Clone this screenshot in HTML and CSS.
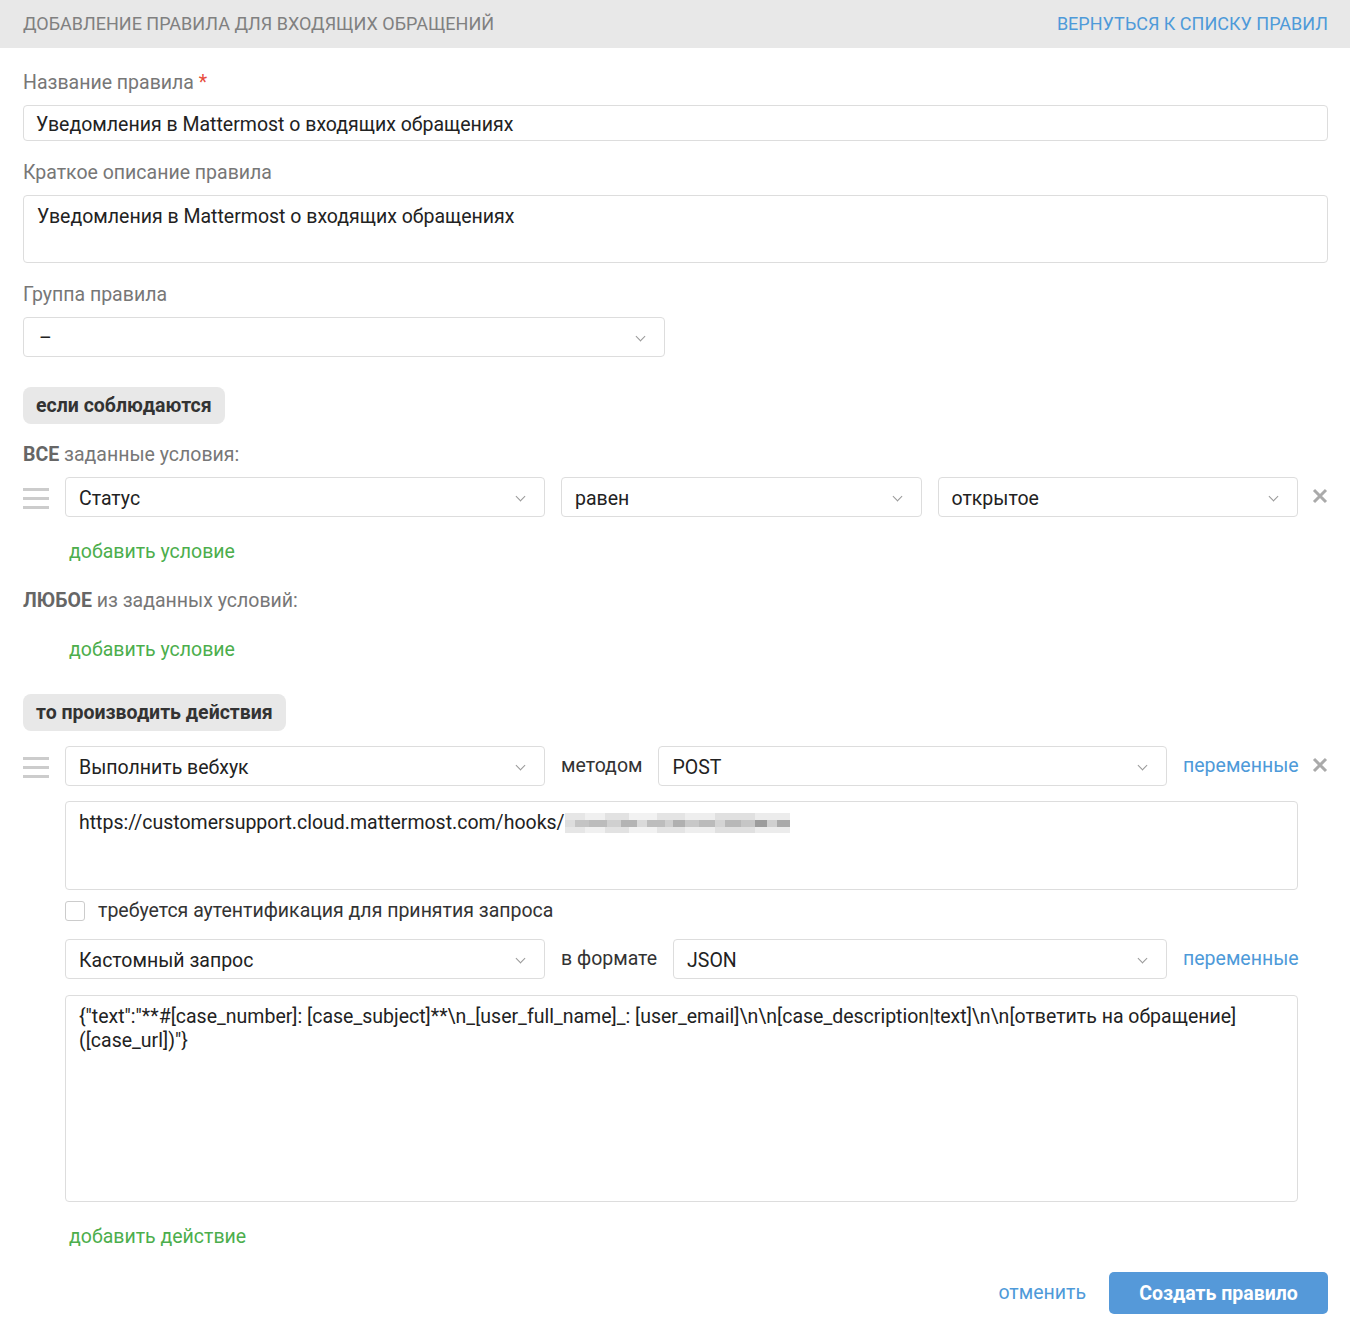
FILE: index.html
```html
<!DOCTYPE html>
<html lang="ru">
<head>
  <meta charset="UTF-8">
  <meta name="viewport" content="width=device-width, initial-scale=1.0">
  <title>Добавление правила</title>
  <link rel="stylesheet" href="styles.css">
</head>
<body>
  <div class="page-head">
    <span class="page-title">Добавление правила для входящих обращений</span>
    <a class="back-link" href="#">Вернуться к списку правил</a>
  </div>

  <form class="rule-form">
    <div class="field">
      <label class="field-label">Название правила <span class="req">*</span></label>
      <div class="input">Уведомления в Mattermost о входящих обращениях</div>
    </div>
    <div class="field">
      <label class="field-label">Краткое описание правила</label>
      <div class="input textarea short">Уведомления в Mattermost о входящих обращениях</div>
    </div>
    <div class="field">
      <label class="field-label">Группа правила</label>
      <div class="select group-select"><span class="dash">–</span><i class="chev"></i></div>
    </div>

    <div class="block-tag">если соблюдаются</div>

    <div class="cond-caption"><b>ВСЕ</b> заданные условия:</div>
    <div class="line">
      <span class="drag"><i></i><i></i><i></i></span>
      <div class="line-body">
        <div class="row">
          <div class="select w-main">Статус<i class="chev"></i></div>
          <div class="select w-op">равен<i class="chev"></i></div>
          <div class="select w-op">открытое<i class="chev"></i></div>
        </div>
      </div>
      <svg class="remove" viewBox="0 0 16 16"><path d="M2 2L14 14M14 2L2 14"/></svg>
    </div>
    <a class="add-link" href="#">добавить условие</a>

    <div class="cond-caption any"><b>ЛЮБОЕ</b> из заданных условий:</div>
    <a class="add-link any-add" href="#">добавить условие</a>

    <div class="block-tag then">то производить действия</div>

    <div class="line">
      <span class="drag"><i></i><i></i><i></i></span>
      <div class="line-body">
        <div class="row">
          <div class="select w-main">Выполнить вебхук<i class="chev"></i></div>
          <span class="word">методом</span>
          <div class="select grow">POST<i class="chev"></i></div>
          <a class="vars" href="#">переменные</a>
        </div>
        <div class="input textarea url">https://customersupport.cloud.mattermost.com/hooks/<span class="masked"></span></div>
        <label class="check"><span class="box"></span>требуется аутентификация для принятия запроса</label>
        <div class="row">
          <div class="select w-main">Кастомный запрос<i class="chev"></i></div>
          <span class="word">в формате</span>
          <div class="select grow">JSON<i class="chev"></i></div>
          <a class="vars" href="#">переменные</a>
        </div>
        <div class="input textarea body">{"text":"**#[case_number]: [case_subject]**\n_[user_full_name]_: [user_email]\n\n[case_description|text]\n\n[ответить на обращение]([case_url])"}</div>
      </div>
      <svg class="remove" viewBox="0 0 16 16"><path d="M2 2L14 14M14 2L2 14"/></svg>
    </div>
    <a class="add-link act-add" href="#">добавить действие</a>

    <div class="form-actions">
      <a class="cancel" href="#">отменить</a>
      <button type="button" class="submit">Создать правило</button>
    </div>
  </form>
</body>
</html>
```

FILE: styles.css
```css
body { margin: 0; font-family: Roboto, "Liberation Sans", Arial, sans-serif; font-size: 19.5px; line-height: 24px; color: #222; background: #fff; }
a { text-decoration: none; }

.page-head { height: 48px; background: #e8e8e8; display: flex; align-items: center; justify-content: space-between; padding: 0 22px 0 23px; }
.page-title { text-transform: uppercase; color: #808080; font-size: 18px; }
.back-link { text-transform: uppercase; color: #4e9ad9; font-size: 18px; }

.rule-form { padding: 23px 22px 20px 23px; }
.field { margin-bottom: 20px; }
.field-label { display: block; color: #777; margin-bottom: 10px; }
.req { color: #e74c3c; }

.input { border: 1px solid #ddd; border-radius: 4px; padding: 3px 12px 0; height: 36px; line-height: 31px; box-sizing: border-box; }
.textarea { line-height: 24px; padding: 9px 13px; white-space: pre-wrap; word-break: break-word; }
.short { height: 68px; }
.url { height: 89px; margin-top: 15px; }
.body { height: 207px; margin-top: 16px; }

.select { position: relative; border: 1px solid #ddd; border-radius: 4px; height: 40px; line-height: 41px; padding: 0 40px 0 13px; box-sizing: border-box; }
.chev { position: absolute; right: 20px; top: 15px; width: 6px; height: 6px; border-right: 1px solid #999; border-bottom: 1px solid #999; transform: rotate(45deg); }
.group-select { width: 642px; }
.dash { padding-left: 2px; }

.block-tag { display: table; background: #e8e8e8; border-radius: 8px; font-weight: 700; color: #333; padding: 0 13px; height: 36px; line-height: 37px; margin-top: 30px; }
.block-tag.then { margin-top: 32px; margin-bottom: 15px; }

.cond-caption { color: #777; margin: 19px 0 10px; }
.cond-caption b { color: #666; }
.cond-caption.any { margin-top: 25px; }

.line { display: flex; align-items: flex-start; gap: 16px; }
.line-body { flex: 1; }
.drag { width: 26px; padding-top: 11px; display: flex; flex-direction: column; gap: 6px; }
.drag i { display: block; height: 3px; background: #ccc; }
.remove { width: 16px; height: 16px; margin-top: 11px; margin-left: -2px; stroke: #aaa; stroke-width: 3; fill: none; }

.row { display: flex; align-items: center; gap: 16px; }
.w-main { width: 480px; flex: none; }
.w-op { flex: 1; }
.grow { flex: 1; }
.word { color: #333; }
.vars { color: #4e9ad9; width: 115px; white-space: nowrap; }

/* hidden part of the hook url */
.masked { display: inline-block; width: 225px; height: 20px; vertical-align: -4px;
  background:
    linear-gradient(90deg, #ddd 0 10px, #c4c4c4 10px 24px, #bcbcbc 24px 42px, #d0d0d0 42px 56px, #b4b4b4 56px 72px, #dadada 72px 82px, #bdbdbd 82px 100px, #cfcfcf 100px 108px, #b0b0b0 108px 120px, #c8c8c8 120px 134px, #bbb 134px 150px, #d4d4d4 150px 160px, #b8b8b8 160px 176px, #c6c6c6 176px 190px, #9c9c9c 190px 202px, #d0d0d0 202px 212px, #aaa 212px) 0 7px / 100% 7px no-repeat,
    linear-gradient(90deg, #e6e6e6 0 20px, #f0f0f0 20px 40px, #e2e2e2 40px 64px, #f2f2f2 64px 92px, #e4e4e4 92px 120px, #eee 120px 150px, #e0e0e0 150px 190px, #ececec 190px 225px) 0 0 / 100% 20px no-repeat; }

.check { display: flex; align-items: center; gap: 13px; margin: 9px 0 16px; color: #333; }
.box { width: 18px; height: 18px; border: 1px solid #ccc; border-radius: 3px; }

.add-link { display: table; color: #4cae4c; margin: 23px 0 0 46px; }
.add-link.any-add { margin-top: 25px; }
.add-link.act-add { margin-top: 23px; }

.form-actions { display: flex; justify-content: flex-end; align-items: center; gap: 23px; margin-top: 23px; }
.cancel { color: #4e9ad9; }
.submit { background: #5599d9; color: #fff; border: none; border-radius: 5px; font: 700 19.5px Roboto, "Liberation Sans", Arial, sans-serif; height: 42px; width: 219px; cursor: pointer; }
```
